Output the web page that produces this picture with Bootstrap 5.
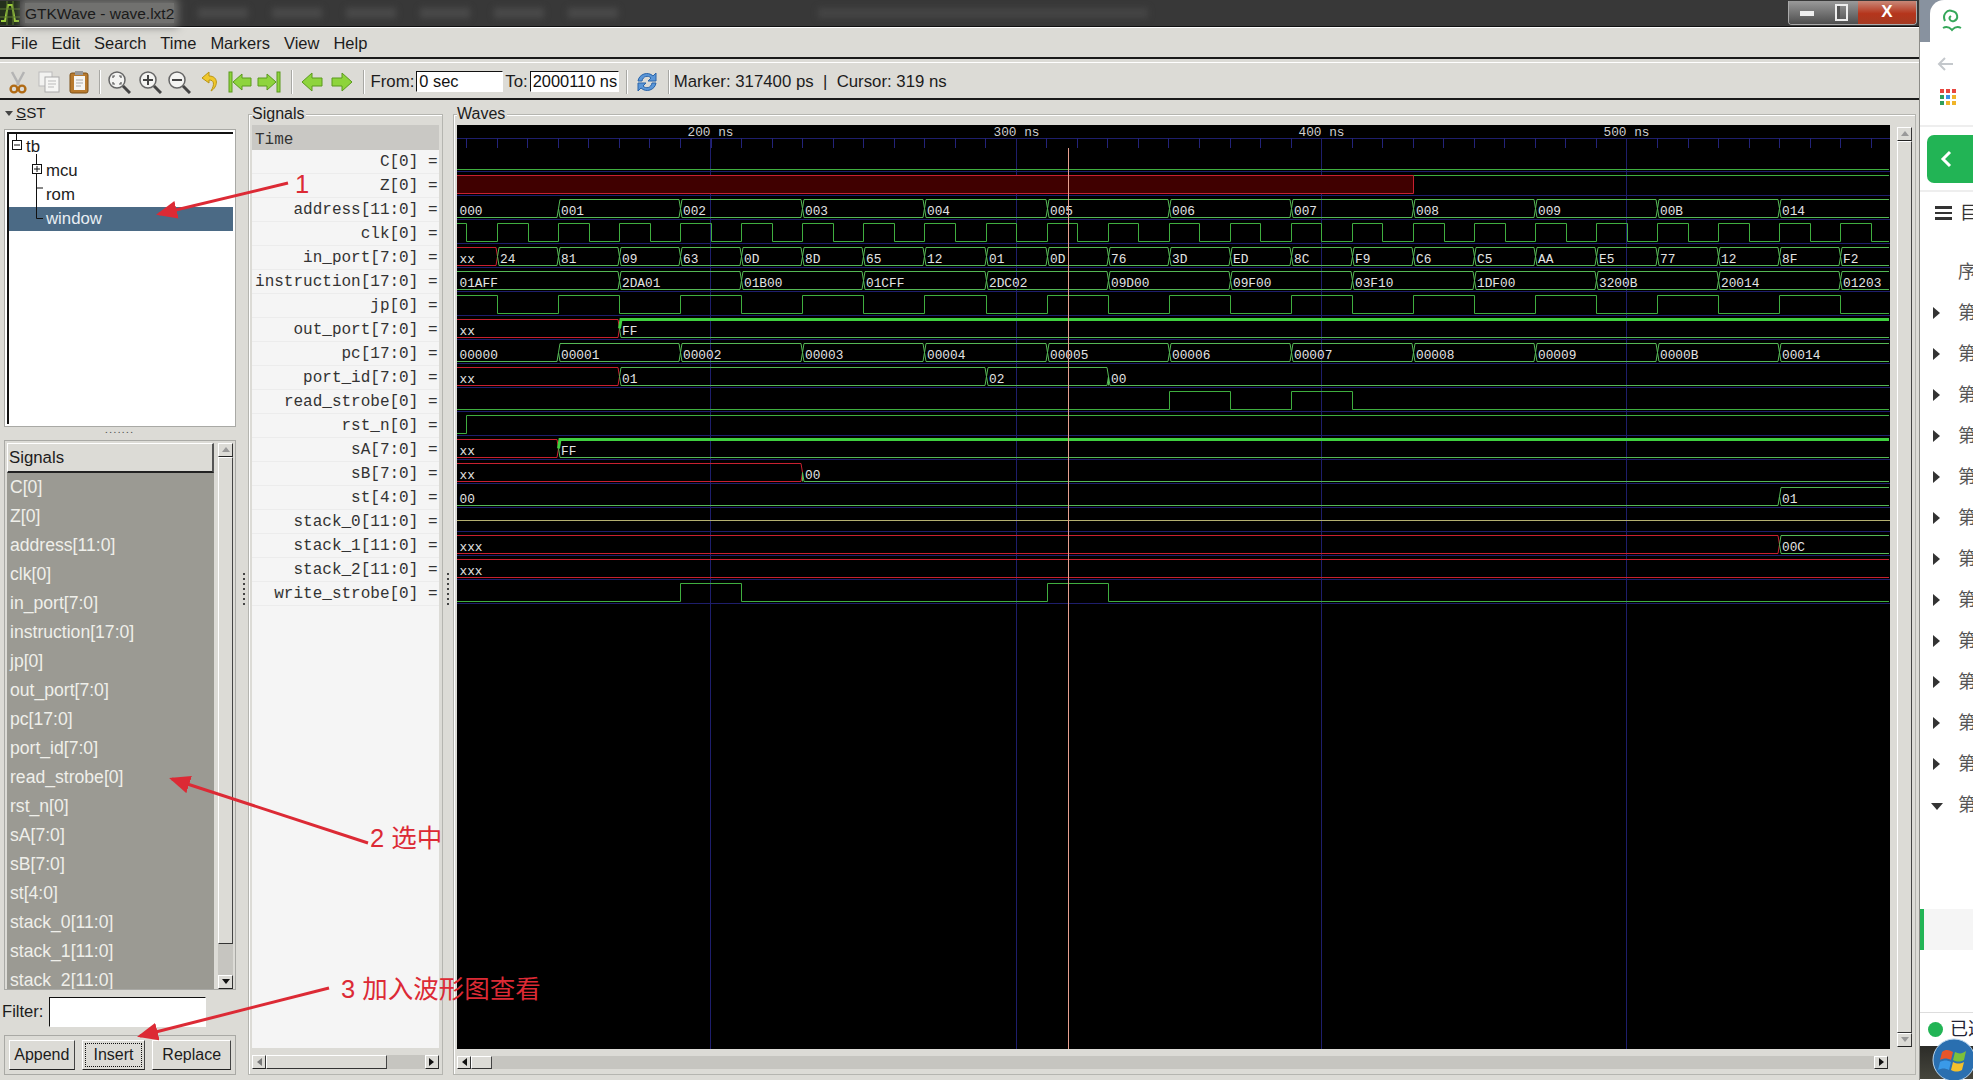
<!DOCTYPE html>
<html lang="en">
<head>
    <meta charset="UTF-8">
    <title>GTKWave - wave.lxt2</title>
    <link href="https://cdn.jsdelivr.net/npm/bootstrap@5.3.0/dist/css/bootstrap.min.css" rel="stylesheet">
    <script src="https://cdn.jsdelivr.net/npm/bootstrap@5.3.0/dist/js/bootstrap.bundle.min.js"></script>
    <style>
        html, body { width: 1974px; height: 1080px; overflow: hidden; margin: 0; }
        body { font-family: "Liberation Sans", "Noto Sans CJK SC", sans-serif; font-size: 16px; color: #1c1c1c; background: #fff; }
        .app-window { width: 1920px; height: 1080px; background: #dcdbd6; border-right: 1px solid #8c8c88; }

        /* title bar */
        .title-bar { height: 27px; background: #383838; border-bottom: 1px solid #111; }
        .title-text { background: #71716f; box-shadow: 0 0 8px 4px #71716f; height: 20px; line-height: 22px; font-size: 15.5px; color: #1a1a1a; margin-left: 5px; white-space: nowrap; }
        .title-ghost { height: 10px; background: #4a4a4a; filter: blur(3px); }
        .win-btns { height: 24px; border: 1px solid #aaa; border-top: 0; border-radius: 0 0 4px 4px; margin-right: 2px; overflow: hidden; }
        .win-btn { height: 100%; background: linear-gradient(#9a9a9a, #4e4e4e); }
        .win-close { background: linear-gradient(#c98878, #b5351c 55%, #a53a22); color: #fff; font-weight: 700; font-size: 17px; line-height: 22px; }

        /* menu + toolbar */
        .menu-bar { height: 32px; border-top: 1px solid #fff; border-bottom: 2px solid #1a1a1a; padding-left: 11px; padding-top: 1px; gap: 14px; font-size: 16.5px; }
        .menu-bar .nav-link { color: #1c1c1c; padding: 0; line-height: 28px; font-size: 16.5px; }
        .tool-bar { height: 41px; padding-top: 7px; padding-left: 6px; font-size: 16.8px; border-bottom: 2px solid #1a1a1a; box-shadow: inset 0 3px 0 #dcdbd6, inset 0 4px 0 #fff; }
        .tool-ico { display: block; width: 24px; height: 24px; flex: none; }
        .tool-sep { width: 1px; height: 24px; background: #a8a8a4; box-shadow: 1px 0 0 #fff; flex: none; }
        .tool-input.form-control { width: 87px; height: 21px; padding: 0 0 0 2px; border-radius: 0; border: 1px solid #fff; border-top-color: #111; border-left-color: #111; font-size: 16.4px; line-height: 19px; color: #111; background: #fff; flex: none; }

        /* panels */
        .left-col { width: 243px; flex: none; padding-left: 4px; padding-right: 7px; }
        .sst-head { height: 29px; padding-left: 1px; padding-bottom: 2px; font-size: 15.2px; }
        .sst-tri { width: 0; height: 0; border: 4px solid transparent; border-top: 5px solid #444; border-bottom: 0; margin-right: 3px; }
        .tree-box { height: 298px; background: #fff; border: 1px solid #fff; outline: 1px solid #a9a9a5; outline-offset: -1px; padding: 2px; }
        .tree-inner { border-top: 2px solid #111; border-left: 2px solid #111; height: 100%; position: relative; padding-top: 1px; font-size: 16.8px; }
        .tree-row { height: 24px; line-height: 24px; white-space: nowrap; }
        .tree-row.selected-row { background: #4b6a85; color: #e8eef3; }
        .pane-dots { height: 13px; letter-spacing: 2px; font-size: 8px; line-height: 8px; color: #555; text-align: center; font-weight: 700; }
        .list-box { height: 550px; border: 1px solid #fff; outline: 1px solid #a9a9a5; outline-offset: -1px; padding: 2px 2px 0 2px; }
        .list-head { height: 30px; line-height: 28px; padding-left: 1px; font-size: 16.8px; border-bottom: 2px solid #222; border-right: 2px solid #555; border-top: 1px solid #fff; border-left: 1px solid #fff; }
        .name-list { background: #9b9a93; color: #efefea; overflow: hidden; font-size: 17.6px; }
        .name-row { height: 29px; line-height: 29px; padding-left: 3px; white-space: nowrap; }
        .filter-row { height: 45px; margin-left: -2px; font-size: 16.6px; }
        .filter-input.form-control { width: 157px; height: 30px; padding: 0; margin-left: 6px; border-radius: 0; border: 1px solid #fff; border-top-color: #111; border-left-color: #111; }
        .btn-box { height: 40px; border: 1px solid #fff; outline: 1px solid #a9a9a5; outline-offset: -1px; padding: 4px; gap: 7px; }
        .btn.btn-gtk { height: 30px; padding: 0; font-size: 16px; line-height: 27px; color: #1c1c1c; background: #dcdbd6; border: 1px solid #fff; border-right-color: #444; border-bottom-color: #222; border-radius: 0; }
        .btn-focus { outline: 1px dotted #111; outline-offset: -4px; }

        .col-grip { flex: none; position: relative; }
        .grip-dots { width: 2px; height: 34px; margin-top: 473px; background: repeating-linear-gradient(#444 0 2px, transparent 2px 5px); }
        .frame-box { position: relative; margin-top: 14px; margin-bottom: 5px; border: 1px solid #b5b5b0; box-shadow: inset 1px 1px 0 #fff; padding: 10px 3px 5px 3px; }
        .frame-legend { position: absolute; top: -12px; left: 3px; background: #dcdbd6; padding-right: 2px; line-height: 22px; }
        .sig-frame { width: 194.5px; flex: none; }
        .wave-frame { width: 1463px; flex: none; padding-left: 3px; padding-right: 4px; }
        .sig-list { height: 924px; background: #f5f5f5; font-family: "Liberation Mono", monospace; color: #333; overflow: hidden; }
        .time-row { height: 25px; line-height: 31px; background: #c9c8c4; padding-left: 3px; }
        .sig-row { height: 24px; line-height: 24px; text-align: right; border-bottom: 1px solid #ececec; padding-right: 1px; white-space: nowrap; }
        .wave-canvas { display: block; width: 1433px; height: 924px; background: #000; flex: none; }

        /* scrollbars */
        .sb-h { height: 14px; margin-top: 7px; }
        .sb-v { width: 15px; flex: none; }
        .sb-btn { background: #dcdbd6; border: 1px solid #fff; border-right-color: #333; border-bottom-color: #222; flex: none; display: flex; align-items: center; justify-content: center; }
        .sb-h .sb-btn { width: 14px; }
        .sb-v .sb-btn { height: 14px; }
        .sb-thumb { background: #dcdbd6; border: 1px solid #fff; border-right-color: #444; border-bottom-color: #333; flex: none; }
        .sb-track { background: #c6c5c0; flex: 1 1 auto; }
        .tri-l, .tri-r, .tri-u, .tri-d { width: 0; height: 0; border: 4px solid transparent; }
        .tri-l { border-right: 5px solid #777; border-left: 0; }
        .tri-r { border-left: 5px solid #111; border-right: 0; }
        .tri-u { border-bottom: 5px solid #999; border-top: 0; }
        .tri-d { border-top: 5px solid #111; border-bottom: 0; }
        .tri-soft { border-top-color: #999; }

        /* page behind the window */
        .side-page { width: 53px; height: 1080px; overflow: hidden; background: #fff; position: relative; color: #555; }
        .side-top { height: 42px; background: #88929f; }
        .side-top-in { height: 42px; margin-left: 10px; background: #fff; border-top-left-radius: 14px; }
        .side-head { height: 85px; border-bottom: 2px solid #eee; padding-left: 20px; }
        .side-green { height: 48px; margin: 8px 0 7px 7px; background: #22b455; border-radius: 7px 0 0 7px; padding-left: 13px; }
        .side-menu { height: 62px; border-top: 2px solid #eee; padding-top: 14px; padding-left: 15px; gap: 8px; color: #333; white-space: nowrap; }
        .burger { width: 17px; height: 14px; border-top: 3px solid #333; border-bottom: 3px solid #333; background: linear-gradient(transparent 3px, #333 3px, #333 5px, transparent 5px); flex: none; }
        .side-item { height: 41px; line-height: 41px; white-space: nowrap; padding-left: 38px; position: relative; font-size: 18px; }
        .side-tri { position: absolute; left: 13px; top: 14px; width: 0; height: 0; border: 6px solid transparent; border-left: 7px solid #333; border-right: 0; }
        .side-tri-down { left: 11px; top: 18px; border: 6px solid transparent; border-top: 7px solid #333; border-bottom: 0; }
        .side-active { height: 41px; margin-top: 83px; background: #f5f5f5; border-left: 4px solid #22b455; }
        .side-foot { height: 34px; margin-top: 62px; border-top: 1px solid #ddd; padding-left: 8px; gap: 7px; color: #223; font-size: 18px; white-space: nowrap; }
        .side-dot { width: 15px; height: 15px; border-radius: 50%; background: #22b455; flex: none; }
        .task-strip { height: 33px; background: linear-gradient(#2c2c28, #45453c); }

        .note-layer { position: absolute; left: 0; top: 0; width: 1974px; height: 1080px; pointer-events: none; }
        .note-text { font-family: "Liberation Sans", "Noto Sans CJK SC", sans-serif; fill: #dc2a35; font-size: 25.5px; }
    </style>
</head>

<body>
    <div class="d-flex position-relative">
        <div class="app-window d-flex flex-column">

            <div class="title-bar d-flex align-items-center">
                <svg width="20" height="24" viewBox="0 0 20 24" class="flex-none">
                    <rect width="20" height="24" fill="#24301c" />
                    <path d="M1 20H5L8 4H12L15 20H19" fill="none" stroke="#9ccc3c" stroke-width="2" />
                    <path d="M0 8H20M0 16H20M7 0V24M13 0V24" stroke="#5c7a30" stroke-width="1" />
                </svg>
                <span class="title-text">GTKWave - wave.lxt2</span>
                <span class="title-ghost ms-4" style="width:50px"></span>
                <span class="title-ghost ms-4" style="width:50px"></span>
                <span class="title-ghost ms-4" style="width:50px"></span>
                <span class="title-ghost ms-4" style="width:50px"></span>
                <span class="title-ghost ms-4" style="width:50px"></span>
                <span class="title-ghost ms-4" style="width:50px"></span>
                <span class="title-ghost" style="width:330px;margin-left:200px;background:#454545"></span>
                <div class="win-btns d-flex ms-auto">
                    <div class="win-btn d-flex align-items-end justify-content-center pb-2" style="width:36px"><span style="width:14px;height:5px;background:#eee;display:block"></span></div>
                    <div class="win-btn d-flex align-items-center justify-content-center" style="width:33px"><span style="width:13px;height:17px;border:2px solid #eee;display:block;box-shadow:inset 3px 0 0 #555"></span></div>
                    <div class="win-btn win-close text-center" style="width:58px">X</div>
                </div>
            </div>

            <nav class="nav menu-bar align-items-center">
                <a class="nav-link">File</a>
                <a class="nav-link">Edit</a>
                <a class="nav-link">Search</a>
                <a class="nav-link">Time</a>
                <a class="nav-link">Markers</a>
                <a class="nav-link">View</a>
                <a class="nav-link">Help</a>
            </nav>

            <div class="tool-bar d-flex align-items-center">
                <!-- scissors -->
                <svg class="tool-ico" viewBox="0 0 24 24"><path d="M6 2L13 15M18 2L11 15" stroke="#b4b4b4" stroke-width="2.5" fill="none"/><circle cx="8" cy="19" r="3.4" fill="none" stroke="#b06a14" stroke-width="2.4"/><circle cx="16" cy="19" r="3.4" fill="none" stroke="#b06a14" stroke-width="2.4"/></svg>
                <!-- copy -->
                <svg class="tool-ico" style="margin-left:6.5px" viewBox="0 0 24 24"><rect x="2" y="2" width="13" height="14" fill="#f2f2f0" stroke="#bbb"/><rect x="8" y="7" width="14" height="15" fill="#f6f6f4" stroke="#aaa"/><path d="M11 11H19M11 14H19M11 17H17" stroke="#bbb"/></svg>
                <!-- paste -->
                <svg class="tool-ico" style="margin-left:6px" viewBox="0 0 24 24"><rect x="3" y="3" width="18" height="20" rx="2" fill="#b87a2e" stroke="#7c5018"/><rect x="7" y="6" width="11" height="14" fill="#f6f6f4"/><rect x="8" y="1" width="8" height="4" fill="#999"/><path d="M9 10H16M9 13H16M9 16H14" stroke="#aaa"/></svg>
                <span class="tool-sep" style="margin:0 7px 0 8.5px"></span>
                <!-- zoom fit -->
                <svg class="tool-ico" viewBox="0 0 24 24"><circle cx="10" cy="10" r="8" fill="#f4f4f2" stroke="#666" stroke-width="1.5"/><path d="M16 16L23 23" stroke="#444" stroke-width="3"/><path d="M6 8V6H8M12 6H14V8M14 12V14H12M8 14H6V12" fill="none" stroke="#555" stroke-width="1.2"/></svg>
                <!-- zoom in -->
                <svg class="tool-ico" style="margin-left:6.5px" viewBox="0 0 24 24"><circle cx="10" cy="10" r="8" fill="#f4f4f2" stroke="#666" stroke-width="1.5"/><path d="M16 16L23 23" stroke="#444" stroke-width="3"/><path d="M5 10H15M10 5V15" stroke="#444" stroke-width="2"/></svg>
                <!-- zoom out -->
                <svg class="tool-ico" style="margin-left:5.5px" viewBox="0 0 24 24"><circle cx="10" cy="10" r="8" fill="#f4f4f2" stroke="#666" stroke-width="1.5"/><path d="M16 16L23 23" stroke="#444" stroke-width="3"/><path d="M5 10H15" stroke="#444" stroke-width="2"/></svg>
                <!-- undo -->
                <svg class="tool-ico" style="margin-left:7px" viewBox="0 0 24 24"><path d="M11 2L4 8L11 13V10C16 10 17 14 13 21C20 17 21 6 11 6Z" fill="#f0c82c" stroke="#b89414"/></svg>
                <!-- first -->
                <svg class="tool-ico" style="margin-left:6px" viewBox="0 0 24 24"><rect x="1" y="2" width="3" height="20" fill="#8ed43c" stroke="#5a9a1c"/><path d="M5 12L14 4V8H23V16H14V20Z" fill="#8ed43c" stroke="#5a9a1c"/></svg>
                <!-- last -->
                <svg class="tool-ico" style="margin-left:5px" viewBox="0 0 24 24"><rect x="20" y="2" width="3" height="20" fill="#8ed43c" stroke="#5a9a1c"/><path d="M19 12L10 4V8H1V16H10V20Z" fill="#8ed43c" stroke="#5a9a1c"/></svg>
                <span class="tool-sep" style="margin:0 8px 0 10px"></span>
                <!-- left / right -->
                <svg class="tool-ico" viewBox="0 0 24 24"><path d="M2 12L12 3V8H22V16H12V21Z" fill="#8ed43c" stroke="#5a9a1c"/></svg>
                <svg class="tool-ico" style="margin-left:6px" viewBox="0 0 24 24"><path d="M22 12L12 3V8H2V16H12V21Z" fill="#8ed43c" stroke="#5a9a1c"/></svg>
                <span class="tool-sep" style="margin:0 7px 0 8.5px"></span>
                <span>From:</span>
                <input class="form-control tool-input" style="margin-left:2px" value="0 sec">
                <span style="margin-left:2px">To:</span>
                <input class="form-control tool-input" style="margin-left:2px;width:89px" value="2000110 ns">
                <span class="tool-sep" style="margin:0 8px 0 7px"></span>
                <!-- reload -->
                <svg class="tool-ico" viewBox="0 0 24 24"><path d="M3 11C4 4 13 1 18 6L21 3V11H13L16 8C13 5 8 6 7 11Z" fill="#5a96d8" stroke="#2a64a8"/><path d="M21 13C20 20 11 23 6 18L3 21V13H11L8 16C11 19 16 18 17 13Z" fill="#5a96d8" stroke="#2a64a8"/></svg>
                <span class="tool-sep" style="margin:0 5px 0 9px"></span>
                <span style="white-space:pre">Marker: 317400 ps  |  Cursor: 319 ns</span>
            </div>

            <div class="d-flex flex-grow-1" style="min-height:0">
                <div class="left-col d-flex flex-column">
                    <div class="sst-head d-flex align-items-center">
                        <span class="sst-tri"></span><span><u>S</u>ST</span>
                    </div>
                    <div class="tree-box">
                        <div class="tree-inner">
                            <div class="tree-row" style="padding-left:17px">tb</div>
                            <div class="tree-row" style="padding-left:37px">mcu</div>
                            <div class="tree-row" style="padding-left:37px">rom</div>
                            <div class="tree-row selected-row" style="padding-left:37px">window</div>
                            <!-- expander lines of the tree -->
                            <svg class="position-absolute top-0 start-0" width="50" height="90">
                                <path d="M7.5 0V6M27.5 20V84.5H34M27.5 54H34" stroke="#111" fill="none"/>
                                <rect x="3.5" y="6.5" width="9" height="9" fill="#fff" stroke="#111"/>
                                <path d="M5 11H11" stroke="#111"/>
                                <rect x="23.5" y="30.5" width="9" height="9" fill="#fff" stroke="#111"/>
                                <path d="M25 35H31M28 32V38" stroke="#111"/>
                            </svg>
                        </div>
                    </div>
                    <div class="pane-dots">.......</div>
                    <div class="list-box d-flex gap-1">
                        <div class="flex-grow-1 d-flex flex-column" style="min-width:0">
                            <div class="list-head">Signals</div>
                            <div class="name-list flex-grow-1" id="nameList"></div>
                        </div>
                        <div class="sb-v d-flex flex-column">
                            <div class="sb-btn"><span class="tri-u"></span></div>
                            <div class="sb-thumb" style="height:487px"></div>
                            <div class="sb-track"></div>
                            <div class="sb-btn"><span class="tri-d"></span></div>
                        </div>
                    </div>
                    <div class="filter-row d-flex align-items-center">
                        <span>Filter:</span>
                        <input class="form-control filter-input">
                    </div>
                    <div class="btn-box d-flex">
                        <button class="btn btn-gtk" style="width:66px">Append</button>
                        <button class="btn btn-gtk btn-focus" style="width:64px">Insert</button>
                        <button class="btn btn-gtk" style="width:79px">Replace</button>
                    </div>
                </div>

                <div class="col-grip d-flex justify-content-start" style="width:5px"><div class="grip-dots"></div></div>

                <div class="frame-box sig-frame d-flex flex-column">
                    <span class="frame-legend">Signals</span>
                    <div class="sig-list">
                        <div class="time-row">Time</div>
                        <div id="sigList"></div>
                    </div>
                    <div class="sb-h d-flex">
                        <div class="sb-btn"><span class="tri-l"></span></div>
                        <div class="sb-thumb" style="width:121px"></div>
                        <div class="sb-track"></div>
                        <div class="sb-btn"><span class="tri-r"></span></div>
                    </div>
                </div>

                <div class="col-grip d-flex justify-content-center" style="width:10.5px"><div class="grip-dots"></div></div>

                <div class="frame-box wave-frame d-flex flex-column">
                    <span class="frame-legend">Waves</span>
                    <div class="d-flex">
                        <svg class="wave-canvas" id="waves" viewBox="457 125 1433 924" xmlns="http://www.w3.org/2000/svg"></svg>
                        <div class="sb-v d-flex flex-column" style="margin-left:7px;margin-top:2px;height:920px">
                            <div class="sb-btn"><span class="tri-u"></span></div>
                            <div class="sb-thumb flex-grow-1"></div>
                            <div class="sb-btn"><span class="tri-d tri-soft"></span></div>
                        </div>
                    </div>
                    <div class="sb-h d-flex" style="width:1431px">
                        <div class="sb-btn"><span class="tri-l" style="border-right-color:#111"></span></div>
                        <div class="sb-thumb" style="width:21px"></div>
                        <div class="sb-track"></div>
                        <div class="sb-btn"><span class="tri-r"></span></div>
                    </div>
                </div>
            </div>
        </div>

        <div class="side-page">
            <div class="side-top"><div class="side-top-in text-center">
                <svg width="26" height="30" viewBox="0 0 26 30" style="margin-top:5px"><path d="M6 16C3 10 8 4 13 6C19 7 20 14 15 16C11 17 9 13 12 11M4 23C9 20 12 24 13 25C14 24 17 20 22 23" fill="none" stroke="#35a85a" stroke-width="2"/></svg>
            </div></div>
            <div class="side-head d-flex flex-column">
                <svg width="18" height="16" viewBox="0 0 18 16" style="margin-top:14px;margin-left:-3px"><path d="M16 8H3M8 2L2 8L8 14" fill="none" stroke="#c4c8cc" stroke-width="2"/></svg>
                <svg width="16" height="17" viewBox="0 0 16 17" style="margin-top:17px"><g fill="#e8473f"><rect width="4" height="4"/><rect x="6" width="4" height="4"/><rect x="12" width="4" height="4"/></g><g><rect y="6" width="4" height="4" fill="#2f9e5b"/><rect x="6" y="6" width="4" height="4" fill="#3a8ee6"/><rect x="12" y="6" width="4" height="4" fill="#f0b429"/></g><g><rect y="12" width="4" height="4" fill="#2f9e5b"/><rect x="6" y="12" width="4" height="4" fill="#f0b429"/><rect x="12" y="12" width="4" height="4" fill="#f0b429"/></g></svg>
            </div>
            <div class="side-green d-flex align-items-center">
                <svg width="12" height="18" viewBox="0 0 12 18"><path d="M10 2L3 9L10 16" fill="none" stroke="#fff" stroke-width="3"/></svg>
            </div>
            <div class="side-menu d-flex align-items-start"><span class="burger"></span><span style="line-height:14px;font-size:18px">目录</span></div>
            <div id="sideList"></div>
            <div class="side-active"></div>
            <div class="side-foot d-flex align-items-center"><span class="side-dot"></span><span>已选</span></div>
            <div class="task-strip"></div>
            <svg class="position-absolute" style="left:12px;top:1038px" width="44" height="42" viewBox="0 0 44 42">
                <circle cx="22" cy="22" r="21" fill="#2a6fb0" stroke="#b8d4ec"/>
                <path d="M10 14C14 11 17 12 21 14L19 22C15 20 12 20 8 22Z" fill="#e8552a"/>
                <path d="M23 14C27 16 30 16 34 13L32 22C28 24 25 24 21 22Z" fill="#7cc03a"/>
                <path d="M8 24C12 22 15 22 19 24L17 32C13 30 10 30 6 32Z" fill="#3a9ae8"/>
                <path d="M21 24C25 26 28 26 32 24L30 32C26 34 23 34 19 32Z" fill="#f4c02c"/>
            </svg>
        </div>

        <!-- red notes drawn on top of the screenshot -->
        <svg class="note-layer" viewBox="0 0 1974 1080">
            <defs>
                <marker id="arrowHead" markerWidth="7" markerHeight="6" refX="6" refY="3" orient="auto">
                    <path d="M0 0L7 3L0 6Z" fill="#dc2a35" />
                </marker>
            </defs>
            <path d="M288 183L159 214" stroke="#dc2a35" stroke-width="3" marker-end="url(#arrowHead)" />
            <path d="M368 843L172 779" stroke="#dc2a35" stroke-width="3" marker-end="url(#arrowHead)" />
            <path d="M329 988L140 1036" stroke="#dc2a35" stroke-width="3" marker-end="url(#arrowHead)" />
            <text class="note-text" x="295" y="193">1</text>
            <text class="note-text" x="370" y="847">2 选中</text>
            <text class="note-text" x="341" y="998">3 加入波形图查看</text>
        </svg>
    </div>

    <script>
        const signals = ["C[0]", "Z[0]", "address[11:0]", "clk[0]", "in_port[7:0]", "instruction[17:0]", "jp[0]", "out_port[7:0]",
            "pc[17:0]", "port_id[7:0]", "read_strobe[0]", "rst_n[0]", "sA[7:0]", "sB[7:0]", "st[4:0]",
            "stack_0[11:0]", "stack_1[11:0]", "stack_2[11:0]", "write_strobe[0]"];

        document.getElementById("sigList").innerHTML = signals.map(s => `<div class="sig-row">${s} =</div>`).join("");
        document.getElementById("nameList").innerHTML = signals.slice(0, 18).map(s => `<div class="name-row">${s}</div>`).join("");

        // right hand page: chapter list
        let side = '<div class="side-item">序</div>';
        for (let i = 0; i < 13; i++) {
            side += `<div class="side-item"><span class="side-tri ${i == 12 ? "side-tri-down" : ""}"></span>第</div>`;
        }
        document.getElementById("sideList").innerHTML = side;

        // wave canvas, coordinates are page pixels (see viewBox)
        const LEFT = 457, RIGHT = 1889, STEP = 30.533;
        const GREEN = "#3fae3f", RED = "#c8202f", GRID = "#1e1e6c";
        const tAt = n => 497 + STEP * n;  // n counts half clocks from first rising edge
        let out = "";
        const line = (d, color, w = 1) => { out += `<path d="${d}" fill="none" stroke="${color}" stroke-width="${w}"/>`; };
        const label = (x, y, t, color = "#e4e4e4") => { out += `<text x="${x}" y="${y}" fill="${color}" font-family="Liberation Mono, monospace" font-size="12.8">${t}</text>`; };
        const hi = k => 151.5 + 24 * k, lo = k => 169.5 + 24 * k;

        // ruler and grid
        line(`M${LEFT} 138.5H1890`, GRID);
        for (let x = 710.5 - 8 * STEP; x < 1890; x += STEP) line(`M${Math.round(x) + .5} 138V148`, "#23237a");
        [[200, 710.5], [300, 1016.5], [400, 1321.5], [500, 1626.5]].forEach(([t, x]) => {
            line(`M${x} 138V1049`, GRID);
            out += `<text x="${x}" y="136" text-anchor="middle" fill="#cfcfcf" font-family="Liberation Mono, monospace" font-size="12.8">${t} ns</text>`;
        });
        signals.forEach((s, k) => line(`M${LEFT} ${lo(k) + 2}H1890`, GRID));

        // single bit signal, edges = x of each toggle
        function bit(k, startHigh, edges) {
            let high = startHigh, d = `M${LEFT} ${high ? hi(k) : lo(k)}`;
            edges.forEach(x => {
                x = Math.round(x) + .5;
                d += `H${x}`;
                high = !high;
                d += `V${high ? hi(k) : lo(k)}`;
            });
            line(d + `H${RIGHT}`, GREEN);
        }

        // bus signal: segs = [[x, text], ...]
        function bus(k, segs) {
            segs.forEach(([x0, t], i) => {
                const x1 = i + 1 < segs.length ? segs[i + 1][0] : RIGHT + 3;
                const a = i ? Math.round(x0) + .5 : LEFT, b = Math.round(x1) + .5;
                const m = (hi(k) + lo(k)) / 2, c = /x/.test(t) ? RED : "#55b855";
                const isZero = /^0+$/.test(t), isOnes = /^F+$/.test(t);
                const left = i ? `M${a} ${m}L${a + 1.5} ${lo(k)}` : `M${a} ${lo(k)}`;
                const right = i + 1 < segs.length ? `L${b - 1.5} ${lo(k)}L${b} ${m}` : `H${RIGHT}`;
                line(left + right, c);
                if (!isZero) {
                    const lt = i ? `M${a} ${m}L${a + 1.5} ${hi(k)}` : `M${a} ${hi(k)}`;
                    const rt = i + 1 < segs.length ? `L${b - 1.5} ${hi(k)}L${b} ${m}` : `H${RIGHT}`;
                    line(lt + rt, isOnes ? "#3fd03f" : c, isOnes ? 3 : 1);
                } else if (i) {
                    line(`M${a} ${m}V${lo(k)}`, c);
                }
                label(i ? a + 2.5 : LEFT + 2.5, lo(k) - 3, t);
            });
        }

        // build [x, text] list, first at canvas start, others every `every` half clocks from `from`
        const seq = (vals, from, every) => vals.map((v, i) => [i ? tAt(from + (i - 1) * every) : LEFT, v]);

        // C, Z
        bit(0, false, []);
        out += `<rect x="${LEFT}" y="${hi(1)}" width="956" height="18" fill="#400000"/>`;
        line(`M${LEFT} ${hi(1)}H1413.5V${lo(1)}H${LEFT}`, RED);
        line(`M1413.5 ${hi(1)}H${RIGHT}`, GREEN);

        bus(2, seq(["000", "001", "002", "003", "004", "005", "006", "007", "008", "009", "00B", "014"], 2, 4));

        let clk = [466];
        for (let n = 0; tAt(n) < RIGHT; n++) clk.push(tAt(n));
        bit(3, true, clk);

        bus(4, seq(["xx", "24", "81", "09", "63", "0D", "8D", "65", "12", "01", "0D", "76", "3D", "ED", "8C", "F9", "C6", "C5", "AA", "E5", "77", "12", "8F", "F2"], 0, 2));
        bus(5, seq(["01AFF", "2DA01", "01B00", "01CFF", "2DC02", "09D00", "09F00", "03F10", "1DF00", "3200B", "20014", "01203"], 4, 4));

        let jp = [];
        for (let n = 0; tAt(n * 2) < RIGHT; n++) jp.push(tAt(n * 2));
        bit(6, true, jp);

        bus(7, [[LEFT, "xx"], [tAt(4), "FF"]]);
        bus(8, seq(["00000", "00001", "00002", "00003", "00004", "00005", "00006", "00007", "00008", "00009", "0000B", "00014"], 2, 4));
        bus(9, [[LEFT, "xx"], [tAt(4), "01"], [tAt(16), "02"], [tAt(20), "00"]]);
        bit(10, false, [tAt(22), tAt(24), tAt(26), tAt(28)]);
        bit(11, false, [466]);
        bus(12, [[LEFT, "xx"], [tAt(2), "FF"]]);
        bus(13, [[LEFT, "xx"], [tAt(10), "00"]]);
        bus(14, [[LEFT, "00"], [tAt(42), "01"]]);
        line(`M${LEFT} ${(hi(15) + lo(15)) / 2}H1890`, "#b4b070");
        bus(16, [[LEFT, "xxx"], [tAt(42), "00C"]]);
        bus(17, [[LEFT, "xxx"]]);
        bit(18, false, [tAt(6), tAt(8), tAt(18), tAt(20)]);

        // marker on top of everything
        line("M1068.5 148V1049", "#e8a090");
        document.getElementById("waves").innerHTML = out;
    </script>
</body>

</html>
